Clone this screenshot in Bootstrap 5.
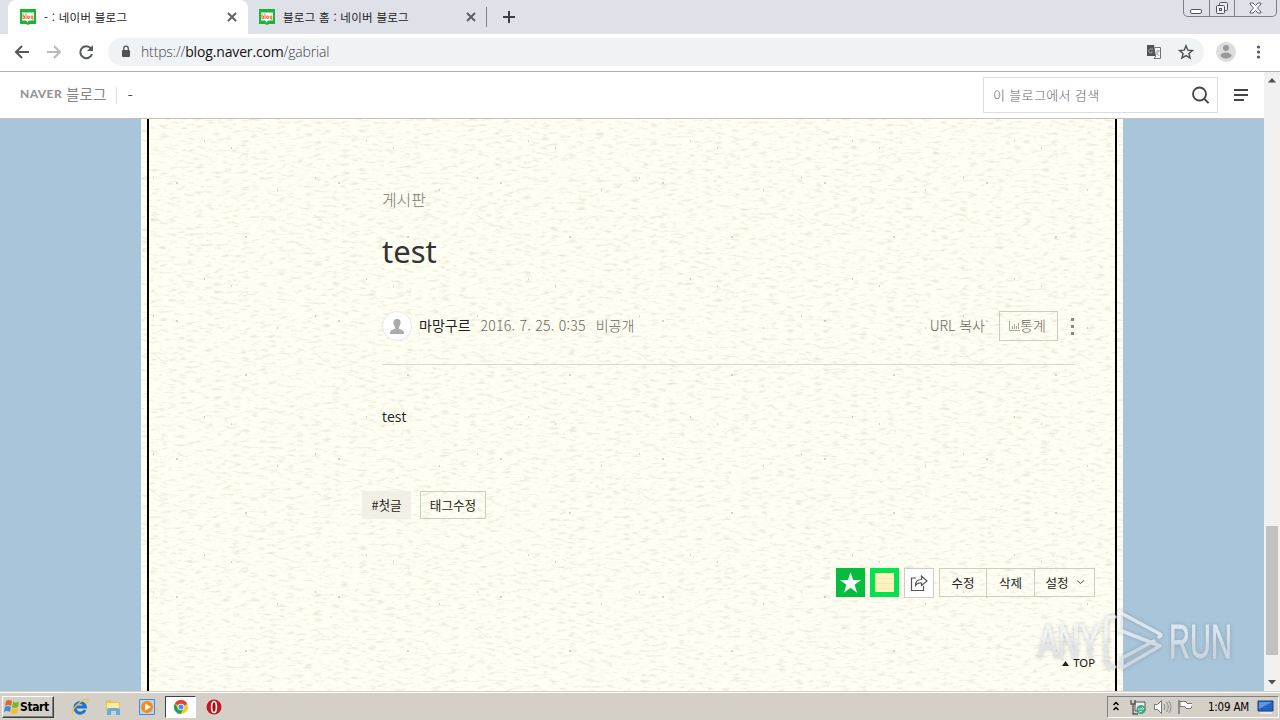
<!DOCTYPE html>
<html lang="ko">
<head>
  <meta charset="UTF-8">
  <title>- : 네이버 블로그</title>
  <link href="https://cdn.jsdelivr.net/npm/bootstrap@5.3.3/dist/css/bootstrap.min.css" rel="stylesheet">
  <style>
    body { width: 1280px; height: 720px; overflow: hidden; font-family: "Noto Sans", "Noto Sans CJK KR", sans-serif; font-size: 12px; line-height: 16px; color: #222; background: #fff; }
    svg { display: block; flex: none; }
    .kr { font-family: "Noto Sans CJK KR", sans-serif; font-weight: 300; white-space: nowrap; }
    .tahoma { font-family: "DejaVu Sans Condensed", "DejaVu Sans", sans-serif; white-space: nowrap; }

    /* browser */
    .tab-strip { height: 34px; background: #dee1e8; }
    .tab-item { height: 34px; padding-left: 12px; }
    .tab-on { width: 240px; margin-left: 8px; background: #fff; border-radius: 8px 8px 0 0; }
    .tab-off { width: 239px; padding-left: 11px; }
    .tab-title { font-size: 11.5px; font-weight: 400; letter-spacing: .27px; margin-left: 8px; color: #222; }
    .tab-sep { width: 1px; height: 20px; background: #808389; margin-left: -1px; }
    .win-btns { height: 17px; width: 94px; margin-right: 3px; border: 1px solid #7b7f88; border-top: 0; border-radius: 0 0 5px 5px; }
    .win-btns > div { height: 16px; }
    .win-btns > div + div { border-left: 1px solid #7b7f88; }
    .w-min { width: 25px; }
    .w-max { width: 25px; }
    .w-cls { width: 42px; }
    .tool-row { height: 38px; padding: 0 0 1px 13px; border-bottom: 1px solid #b0b2ae; }
    .omnibox { width: 1096px; height: 28px; margin-left: 13px; padding: 0 10px 0 12px; background: #f0f3f6; border-radius: 14px; }
    .url { font-family: "Open Sans", sans-serif; font-size: 14px; font-weight: 300; letter-spacing: -.15px; margin-left: 9px; color: #444; }
    .url b { font-weight: 400; color: #111; }

    /* page */
    .view { height: 619px; }
    .blog-head { height: 47px; border-bottom: 1px solid #c4c1b8; padding: 0 7px 0 20px; }
    .naver { font-family: "Lato", sans-serif; font-weight: 900; font-size: 12px; line-height: 14px; color: #979797; letter-spacing: .4px; margin-bottom: 2px; }
    .blog-word { font-size: 14.6px; font-weight: 400; color: #858585; margin-left: 4px; margin-bottom: 2px; }
    .head-sep { width: 1px; height: 16px; background: #ddd; margin: 0 10px; }
    .find { width: 235px; height: 36px; border: 1px solid #ddd; padding: 0 8px 0 9px; margin-right: 16px; }
    .find span { font-size: 13px; letter-spacing: .35px; color: #666; }
    .blog-body { height: 572px; background: #a9c5d9; padding-left: 141px; }
    .paper { width: 982px; height: 572px; background: #fffef2; isolation: isolate; }
    .texture { top: 0; left: 0; z-index: -1; }
    .sheet { width: 970px; height: 572px; margin-left: 6px; border: solid #000; border-width: 0 2px; padding: 69px 20px 0 213px; }
    .post-part { margin-left: 20px; width: 692px; }
    .category { font-size: 15.9px; line-height: 24px; color: #7d786e; }
    .post-title { font-size: 31px; line-height: 40px; margin-top: 19px; color: #333; }
    .author-row { height: 30px; margin-top: 40px; }
    .avatar { width: 30px; height: 30px; border: 1px solid #e8e8e8; border-radius: 50%; background: #fff; }
    .author-row .kr { line-height: 16px; margin-bottom: 2px; }
    .nick { font-size: 14px; font-weight: 400; margin-left: 7px; color: #222; }
    .meta-txt { font-size: 14px; color: #6a685f; }
    .post-date { margin-left: 10px; letter-spacing: .26px; }
    .secret { margin-left: 10px; }
    .stat-btn { width: 59px; height: 30px; border: 1px solid #cfcdbb; margin: 0 13px 0 14px; padding-left: 9px; }
    .rule { height: 1px; background: #d9d8ce; margin-top: 23px; }
    .post-text { font-family: "Open Sans", sans-serif; font-size: 14px; line-height: 20px; margin-top: 42px; }
    .tag-row { margin-top: 64px; gap: 9px; }
    .tag-box { height: 28px; font-size: 12.6px; font-weight: 400; color: #222; }
    .tag-fill { width: 49px; background: #f2f0e5; }
    .tag-line { width: 66px; border: 1px solid #cfcdbb; }
    .tool-btns { margin-top: 49px; height: 30px; }
    .sq { width: 30px; height: 30px; }
    .share-sq { border: 1px solid #ccc; background: #fff; margin-left: 4px; margin-right: 5px; }
    .edit-group { height: 29px; width: 156px; border: 1px solid #cfcdbb; font-size: 12.5px; font-weight: 400; color: #222; }
    .edit-group > div + div { border-left: 1px solid #cfcdbb; }
    .g1 { width: 46px; }
    .g2 { width: 48px; }
    .g3 { width: 60px; }
    .go-top { margin-top: 57px; font-family: "Noto Sans", sans-serif; font-size: 11.3px; color: #111; }
    .scroller { width: 16px; height: 619px; background: #f1f1f1; padding: 6px 0 5px; }
    .thumb { width: 12px; height: 129px; background: #c1c1c1; margin-top: 442px; }

    /* taskbar */
    .taskbar { height: 29px; background: #d4d0c8; border-top: 1px solid #d4d0c8; box-shadow: inset 0 1px #fff; padding: 4px 1px 2px 2px; }
    .start { width: 52px; height: 22px; border: 1px solid; border-color: #fff #404040 #404040 #fff; box-shadow: inset -1px -1px #808080; padding-left: 1px; }
    .start span { font-family: "DejaVu Sans Condensed", sans-serif; font-weight: 700; font-size: 12px; color: #000; letter-spacing: -.4px; margin-left: 1px; }
    .quick { margin-left: 17px; gap: 16px; }
    .run-app { width: 31px; height: 22px; margin: 0 10px; background: #fff; border: 1px solid; border-color: #404040 #fff #fff #404040; }
    .tray { width: 172px; height: 22px; border: 1px solid; border-color: #808080 #fff #fff #808080; }
    .tray-time { font-size: 11.5px; color: #000; letter-spacing: -.2px; }

    .watermark { left: 1030px; top: 600px; opacity: .72; filter: drop-shadow(0 0 2px rgba(90, 100, 110, .5)); }
    .watermark text { font-family: "Liberation Sans", sans-serif; font-size: 48px; fill: url(#wmFade); stroke: url(#wmFade); stroke-width: .8px; }
  </style>
</head>
<body>
  <svg width="0" height="0" class="position-absolute">
    <symbol id="blogIcon" viewBox="0 0 16 16">
      <path d="M0 0h16v15h-6l-2 1-2-1H0z" fill="#19b53b"/>
      <path d="M2 3.500h12v8H9l-1.500 2-1.500-2H2z" fill="#fff"/>
      <path d="M3 4.500v5M3 7h1.500v2.500H3M6 4.500v5.500M7.700 7h1.600v2.500H7.700zM12.800 11V7h-1.600v2.300h1.600" fill="none" stroke="#ef6b35"/>
    </symbol>
    <symbol id="closeX" viewBox="0 0 10 10"><path d="M1 1l8 8M9 1L1 9" stroke="#5a5d62" stroke-width="1.900"/></symbol>
  </svg>

  <!-- tabs -->
  <div class="tab-strip d-flex align-items-start">
    <div class="tab-item tab-on d-flex align-items-center">
      <svg width="16" height="16"><use href="#blogIcon"/></svg>
      <span class="tab-title kr">- : 네이버 블로그</span>
      <svg class="ms-auto me-2" width="16" height="10" viewBox="0 0 16 10"><use href="#closeX" x="3" width="10" height="10"/></svg>
    </div>
    <div class="tab-item tab-off d-flex align-items-center">
      <svg width="16" height="16"><use href="#blogIcon"/></svg>
      <span class="tab-title kr">블로그 홈 : 네이버 블로그</span>
      <svg class="ms-auto me-2" width="16" height="10" viewBox="0 0 16 10"><use href="#closeX" x="3" width="10" height="10"/></svg>
    </div>
    <div class="d-flex align-items-center h-100">
      <div class="tab-sep"></div>
      <svg width="12" height="12" class="ms-3" viewBox="0 0 12 12"><path d="M6 0v12M0 6h12" stroke="#3c4043" stroke-width="2"/></svg>
    </div>
    <div class="win-btns d-flex ms-auto">
      <div class="w-min d-flex align-items-center justify-content-center"><svg width="13" height="14"><rect x=".5" y="8.500" width="11" height="4" rx="1.500" fill="#fff" stroke="#50545c"/></svg></div>
      <div class="w-max d-flex align-items-center justify-content-center"><svg width="14" height="14" fill="#eceef2" stroke="#50545c"><rect x="4.500" y="1.500" width="8" height="8" rx="1"/><rect x="1.500" y="4.500" width="8" height="8" rx="1"/><rect x="4.500" y="7.500" width="2" height="2"/></svg></div>
      <div class="w-cls d-flex align-items-center justify-content-center"><svg width="13" height="12"><path d="M1 1h3l2.500 2.500L9 1h3v1L8.500 6l3.500 4v1H9L6.500 8.500 4 11H1v-1l3.500-4L1 2z" fill="#fff" stroke="#60646c"/></svg></div>
    </div>
  </div>

  <!-- toolbar -->
  <div class="tool-row d-flex align-items-center">
    <svg width="82" height="18" viewBox="0 0 82 18" fill="none" stroke="#55585c" stroke-width="2">
      <path d="M16 9H3M9 3L3 9l6 6"/>
      <path d="M34 9h13M41 3l6 6-6 6" stroke="#b8babd"/>
      <path d="M78 5.500A6 6 0 1 0 79 11"/><path d="M80 2v6h-6z" fill="#55585c" stroke="none"/>
    </svg>
    <div class="omnibox d-flex align-items-center">
      <svg width="12" height="14" viewBox="0 0 12 14"><rect x="2" y="5" width="8" height="7" rx="1" fill="#505357"/><path d="M3.700 6V3.500a2.300 2.300 0 0 1 4.600 0V6" fill="none" stroke="#505357" stroke-width="1.300"/></svg>
      <span class="url">https://<b>blog.naver.com</b>/gabrial</span>
      <svg class="ms-auto" width="16" height="16" viewBox="0 0 16 16"><path d="M1 1h7l2 11H1z" fill="#505357"/><path d="M9 3.500h5.500v11H8l2-2.500" fill="#f8f9fa" stroke="#707377"/><path d="M7 5H5a2 2 0 1 0 1.500 3H5M10 7h4M12 6v1c0 2-1 3-2 4m0-3l3 4" fill="none" stroke="#a5a7aa"/></svg>
      <svg class="ms-3" width="16" height="16" viewBox="0 0 16 16"><path d="M8 1.800l1.800 4.400 4.700.3-3.600 3 1.200 4.600L8 11.600l-4.100 2.500 1.200-4.600-3.600-3 4.700-.3z" fill="none" stroke="#4a4d51" stroke-width="1.400"/></svg>
    </div>
    <svg class="ms-auto" width="20" height="20" viewBox="0 0 20 20"><circle cx="10" cy="10" r="10" fill="#dcdcdd"/><circle cx="10" cy="6" r="3" fill="#98999b"/><ellipse cx="10" cy="13.500" rx="5.500" ry="3" fill="#98999b"/></svg>
    <svg width="44" height="16" viewBox="0 0 44 16" fill="#505357"><circle cx="22.500" cy="3" r="1.600"/><circle cx="22.500" cy="8" r="1.600"/><circle cx="22.500" cy="13" r="1.600"/></svg>
  </div>

  <div class="view d-flex">
    <div class="flex-grow-1">
      <!-- blog header -->
      <div class="blog-head d-flex align-items-center">
        <span class="naver">NAVER</span>
        <span class="kr blog-word">블로그</span>
        <div class="head-sep"></div>
        <span class="kr fs-6">-</span>
        <div class="find d-flex align-items-center ms-auto">
          <span class="kr">이 블로그에서 검색</span>
          <svg class="ms-auto" width="17" height="18" viewBox="0 0 17 18" fill="none" stroke="#444" stroke-width="1.800"><circle cx="7.500" cy="8" r="6.500"/><path d="M12 12.500l4.500 4.500"/></svg>
        </div>
        <svg class="me-2" width="15" height="12" viewBox="0 0 15 12"><path d="M0 1h14M0 6h14M0 11h10" stroke="#444" stroke-width="2"/></svg>
      </div>

      <div class="blog-body">
        <div class="paper position-relative">
          <!-- fibre paper grain -->
          <svg class="texture position-absolute" width="982" height="572">
            <filter id="fibre" x="0" y="0" width="100%" height="100%" color-interpolation-filters="sRGB">
              <feTurbulence type="fractalNoise" baseFrequency=".11 .36" numOctaves="4" seed="21"/>
              <feColorMatrix values="0 0 0 0 .80  0 0 0 0 .77  0 0 0 0 .68  2.400 0 0 0 -1.250"/>
            </filter>
            <pattern id="specks" width="162" height="138" patternUnits="userSpaceOnUse">
              <path d="M12 59h1M35 64h2M63 22h1M90 29h1M136 71h1M104 118h2" stroke="#aaa79d"/>
              <path d="M98 40q2-6 9-5m-3 0q5 0 1 4M10 96q6 1 8 5t9 3M120 101q9-6 14-1M44 116q7-3 12 0" fill="none" stroke="#eeebdf"/>
            </pattern>
            <rect width="982" height="572" filter="url(#fibre)" opacity=".48"/>
            <rect width="982" height="572" fill="url(#specks)"/>
          </svg>
          <div class="sheet">
            <div class="post-part">
              <div class="category kr">게시판</div>
              <div class="post-title">test</div>
              <div class="author-row d-flex align-items-center">
                <div class="avatar d-flex align-items-center justify-content-center">
                  <svg width="14" height="15" viewBox="0 0 14 15" fill="#aaa"><path d="M7 0c3 0 4 2 3.500 4.500Q10 7 8.800 8v1.500L13 11.500q1 .5 1 3.500H0q0-3 1-3.500l4.200-2V8Q4 7 3.500 4.500 3 0 7 0z"/></svg>
                </div>
                <span class="nick kr">마망구르</span>
                <span class="meta-txt post-date kr">2016. 7. 25. 0:35</span>
                <span class="meta-txt secret kr">비공개</span>
                <span class="meta-txt kr ms-auto">URL 복사</span>
                <div class="stat-btn d-flex align-items-center">
                  <svg width="11" height="10" viewBox="0 0 11 10"><path d="M.5 0v9.500H11M3.500 8V5M5.500 8V3M7.500 8V5M9.500 8V2" fill="none" stroke="#aaa89c"/></svg>
                  <span class="meta-txt kr">통계</span>
                </div>
                <svg width="3" height="17" viewBox="1 0 3 17" fill="#888"><path d="M1 0h3v3H1zM1 7h3v3H1zM1 14h3v3H1z"/></svg>
              </div>
              <div class="rule"></div>
              <div class="post-text">test</div>
            </div>
            <div class="tag-row d-flex">
              <div class="tag-box tag-fill kr d-flex align-items-center justify-content-center">#첫글</div>
              <div class="tag-box tag-line kr d-flex align-items-center justify-content-center">태그수정</div>
            </div>
            <div class="tool-btns d-flex justify-content-end">
              <svg class="sq" viewBox="0 0 30 30"><path d="M0 0h29v29H0z" fill="#04bd3d"/><path d="M14.500 4l2.600 8h8l-6.500 4.800 2.500 8-6.600-5-6.600 5 2.500-8L4 12h8z" fill="#fff"/></svg>
              <svg class="sq ms-1" viewBox="0 0 30 30"><path d="M0 0h29v29H0z" fill="#04e24f"/><path d="M5 5h19v19H5z" fill="#fbf3bc"/><path d="M5 10.500h19M5 15.500h19M5 20.500h19" stroke="#f6e8b0"/></svg>
              <div class="sq share-sq d-flex align-items-center justify-content-center">
                <svg width="18" height="18" viewBox="0 0 18 18" fill="none" stroke="#555" stroke-width="1.200"><path d="M6 4H1.500v12.500h12V12"/><path d="M5.500 11.500q0-6 6-6V2L17 7l-5.500 4.500V9q-4-.5-6 2.500z"/></svg>
              </div>
              <div class="edit-group kr d-flex">
                <div class="g1 d-flex align-items-center justify-content-center">수정</div>
                <div class="g2 d-flex align-items-center justify-content-center">삭제</div>
                <div class="g3 d-flex align-items-center justify-content-center">설정<svg class="ms-2" width="7" height="5"><path d="M0 .5l3.500 3L7 .5" fill="none" stroke="#555"/></svg></div>
              </div>
            </div>
            <div class="go-top d-flex align-items-center justify-content-end"><svg class="me-1" width="7" height="5"><path d="M3.500 0L7 5H0z" fill="#222"/></svg>TOP</div>
          </div>
        </div>
      </div>
    </div>
    <div class="scroller d-flex flex-column align-items-center">
      <svg width="8" height="6"><path d="M4 0l4 4.500H0z" fill="#505050"/></svg>
      <div class="thumb"></div>
      <svg class="mt-auto" width="8" height="6"><path d="M0 0h8L4 4.500z" fill="#505050"/></svg>
    </div>
  </div>

  <!-- taskbar -->
  <div class="taskbar d-flex align-items-center">
    <div class="start d-flex align-items-center">
      <svg width="15" height="16" viewBox="0 0 15 16"><path d="M2 2q3-2 6 0L7 7Q4 5 1 7z" fill="#e8622c"/><path d="M9 2.500q3 2 6 0L14 8q-3 2-6 0z" fill="#78b82e"/><path d="M1 8q3-2 6 0l-1 5q-3-2-6 0z" fill="#3b8fd9"/><path d="M8 9q3 2 6 0l-1 5q-3 2-6 0z" fill="#f4c222"/></svg>
      <span>Start</span>
    </div>
    <div class="quick d-flex align-items-center">
      <svg width="18" height="18" viewBox="0 0 18 18" fill="none"><path d="M14 12a5.300 5.300 0 1 1 .4-3H5" stroke="#1a74d0" stroke-width="3"/><path d="M2 16Q0 13 6 7t10-6q2 1 0 4" stroke="#efc33a" stroke-width="1.400"/></svg>
      <svg width="18" height="18" viewBox="0 0 18 18"><path d="M1 2h5l1 2h8v9H1z" fill="#e9c558"/><path d="M2 5h12v7H2z" fill="#fbeba6"/><path d="M2 17v-5q0-2 2-2h8q3 0 3 2v5h-4v-4H6v4z" fill="#62aedd"/></svg>
      <svg width="16" height="16" viewBox="0 0 16 16"><path d="M.5.500h15v15H.5z" fill="#b7d8f3" stroke="#4d8ac2"/><circle cx="8" cy="8" r="6" fill="#f58a1a"/><path d="M6 4.500L12 8l-6 3.500z" fill="#fff"/></svg>
    </div>
    <div class="run-app d-flex align-items-center justify-content-center">
      <svg width="14" height="14" viewBox="0 0 14 14"><circle cx="7" cy="7" r="7" fill="#f6c72e"/><path d="M7 7L.9 3.500A7 7 0 0 1 13.300 4z" fill="#db4437"/><path d="M.9 3.500A7 7 0 0 0 6.500 14L9.500 9 7 7 4 8.500z" fill="#1fa15d"/><circle cx="7" cy="7" r="3.300" fill="#fff"/><circle cx="7" cy="7" r="2.500" fill="#4a8af4"/></svg>
    </div>
    <svg width="16" height="16" viewBox="0 0 16 16"><circle cx="8" cy="8" r="7.500" fill="#c4161c"/><ellipse cx="8" cy="8" rx="2.400" ry="5.500" fill="#a80c12" stroke="#fff" stroke-width="1.600"/></svg>
    <div class="tray d-flex align-items-center ms-auto">
      <svg width="84" height="18" viewBox="0 0 84 18" fill="none">
        <path d="M5.500 7L8 4.500 10.500 7M5.500 12L8 9.500l2.500 2.500" stroke="#000" stroke-width="1.500"/>
        <path d="M27 4h10v9H27z" fill="#eee" stroke="#555"/><path d="M23 2v4h4V2M25 6v10h5" stroke="#555" stroke-width="1.300"/><circle cx="33" cy="11.500" r="4.500" fill="#3aa887"/><path d="M30 11h6l-2-2m0 4l-3 1" stroke="#d5f2e5"/>
        <path d="M46.500 6.500h3l4-4v13l-4-4h-3z" fill="#fff" stroke="#777"/><path d="M56 6q2 3 0 6M58.500 4q3.500 5 0 10M61 3q4 6 0 12" stroke="#888"/>
        <path d="M71 2v14" stroke="#777" stroke-width="1.500"/><path d="M72 3.500h6l1 2h6l-2 5h-5l-1-2h-5z" fill="#fff" stroke="#777"/>
      </svg>
      <span class="tray-time tahoma ms-auto">1:09 AM</span>
      <svg class="ms-2 me-1" width="17" height="16" viewBox="0 0 17 16"><path d="M1 2h15v10H1z" fill="#2562bd" stroke="#1d3f7e"/><path d="M2 3h13L2 10z" fill="#5a98e2"/><path d="M3 14h12" stroke="#e6e9ee" stroke-width="2"/></svg>
    </div>
  </div>

  <!-- watermark over the page -->
  <svg class="watermark position-absolute" width="215" height="80" viewBox="0 0 215 80">
    <linearGradient id="wmFade" gradientUnits="userSpaceOnUse" x1="0" y1="36" x2="0" y2="46">
      <stop offset="0" stop-color="#eef3f8"/><stop offset="1" stop-color="#d8dee4"/>
    </linearGradient>
    <text x="8" y="58" textLength="62" lengthAdjust="spacingAndGlyphs">ANY</text>
    <text x="139" y="58" textLength="63" lengthAdjust="spacingAndGlyphs">RUN</text>
    <g fill="none" stroke="url(#wmFade)" stroke-width="3.500" stroke-linejoin="round" stroke-linecap="round">
      <path d="M85 17q-9-1-9 6v38q0 7 9 6"/>
      <path d="M89 31V12l41 22q2 2-1 3"/>
      <path d="M92 31l38 15L92 68V58l32-17"/>
    </g>
  </svg>

  <script src="https://cdn.jsdelivr.net/npm/bootstrap@5.3.3/dist/js/bootstrap.bundle.min.js"></script>
</body>
</html>
